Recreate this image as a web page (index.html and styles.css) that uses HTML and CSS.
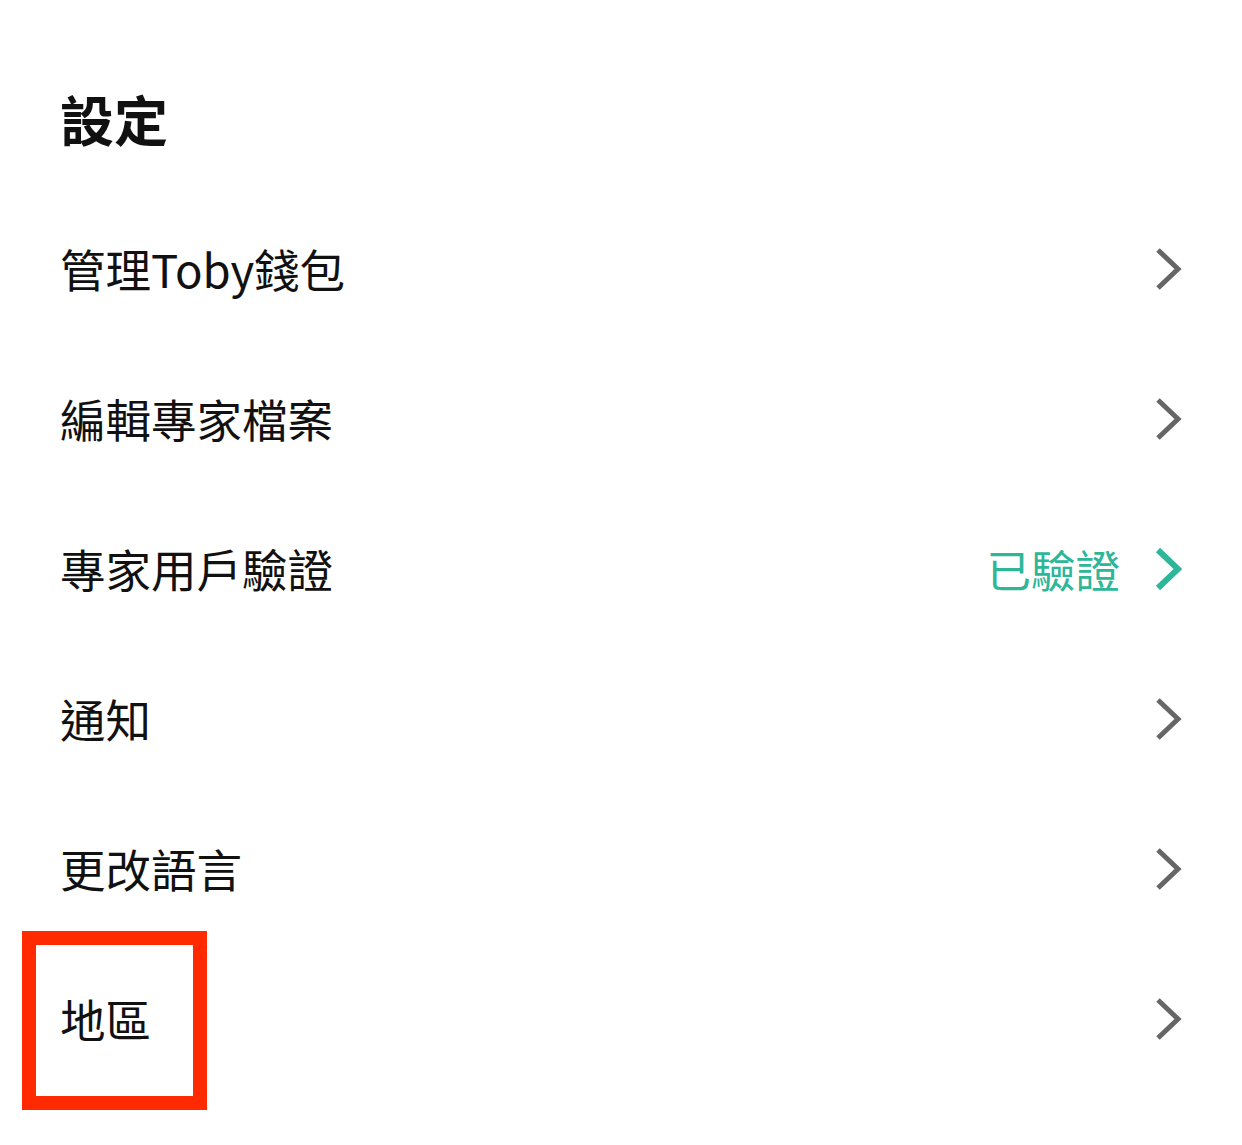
FILE: index.html
```html
<!DOCTYPE html>
<html lang="zh-Hant">
<head>
  <meta charset="UTF-8">
  <title>設定</title>
  <link rel="stylesheet" href="styles.css">
</head>
<body>
  <div class="settings">
    <h1 class="title">設定</h1>

    <a class="row" href="#">
      <span class="label">管理Toby錢包</span>
      <svg class="chev" viewBox="0 0 28 46"><path d="M4 4 L24 23 L4 42"/></svg>
    </a>
    <a class="row" href="#">
      <span class="label">編輯專家檔案</span>
      <svg class="chev" viewBox="0 0 28 46"><path d="M4 4 L24 23 L4 42"/></svg>
    </a>
    <a class="row" href="#">
      <span class="label">專家用戶驗證</span>
      <span class="status">已驗證</span>
      <svg class="chev chev-ok" viewBox="0 0 28 46"><path d="M4 4 L24 23 L4 42"/></svg>
    </a>
    <a class="row" href="#">
      <span class="label">通知</span>
      <svg class="chev" viewBox="0 0 28 46"><path d="M4 4 L24 23 L4 42"/></svg>
    </a>
    <a class="row" href="#">
      <span class="label">更改語言</span>
      <svg class="chev" viewBox="0 0 28 46"><path d="M4 4 L24 23 L4 42"/></svg>
    </a>
    <a class="row" href="#">
      <span class="label">地區</span>
      <svg class="chev" viewBox="0 0 28 46"><path d="M4 4 L24 23 L4 42"/></svg>
      <span class="highlight"></span>
    </a>
  </div>
</body>
</html>
```

FILE: styles.css
```css
body {
  margin: 0;
  background: #fff;
  font-family: "Noto Sans CJK TC", "Noto Sans", sans-serif;
  color: #111;
}
.settings {
  padding: 44px 60px 48px 60px;
}
.title {
  margin: 0;
  height: 150px;
  display: flex;
  align-items: center;
  font-size: 54px;
  font-weight: 700;
  line-height: 1;
}
.row {
  position: relative;
  display: flex;
  align-items: center;
  height: 150px;
  color: #111;
  text-decoration: none;
}
.label {
  flex: 1;
  font-size: 45.5px;
  line-height: 1;
}
.status {
  font-size: 44.5px;
  line-height: 1;
  color: #2db698;
  margin-right: 34px;
}
.chev {
  width: 28px;
  height: 46px;
  fill: none;
  stroke: #666;
  stroke-width: 5;
}
.chev-ok {
  stroke: #2db698;
  stroke-width: 6;
}
.highlight {
  position: absolute;
  left: -38px;
  top: -13px;
  width: 157px;
  height: 151px;
  border: 14px solid #ff2a00;
}
```
